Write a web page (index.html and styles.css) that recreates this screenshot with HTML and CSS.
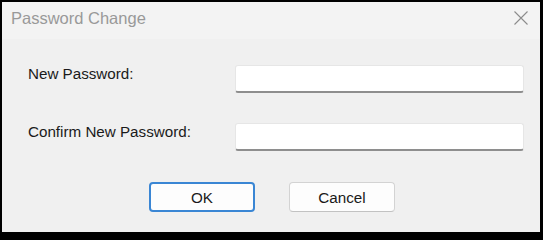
FILE: index.html
```html
<!DOCTYPE html>
<html>
<head>
<meta charset="utf-8">
<title>Password Change</title>
<link rel="stylesheet" href="styles.css">
</head>
<body>
<div class="dialog">
  <div class="titlebar">
    <span class="title">Password Change</span>
    <svg class="close" width="14" height="14" viewBox="0 0 14 14">
      <path d="M0.5 0.5 L13.5 13.5 M13.5 0.5 L0.5 13.5" stroke="#8c8c8c" stroke-width="1.1" fill="none"/>
    </svg>
  </div>
  <div class="content">
    <div class="form">
      <label class="label">New Password:</label>
      <div class="input"></div>
      <label class="label">Confirm New Password:</label>
      <div class="input"></div>
    </div>
    <div class="buttons">
      <button class="btn btn-default">OK</button>
      <button class="btn">Cancel</button>
    </div>
  </div>
</div>
</body>
</html>
```
FILE: styles.css
```css
html, body {
  margin: 0;
  padding: 0;
}
body {
  background: #000;
  width: 543px;
  height: 236px;
  overflow: hidden;
  font-family: "Liberation Sans", Arial, sans-serif;
}
.dialog {
  margin: 2px 3px 4px 2px;
  height: 230px;
  background: #f0f0f0;
  display: flex;
  flex-direction: column;
}
.titlebar {
  height: 37px;
  background: #f3f3f3;
  display: flex;
  justify-content: space-between;
  align-items: flex-start;
  box-sizing: border-box;
  padding: 7px 12px 0 9px;
}
.title {
  font-size: 16.5px;
  line-height: 19px;
  color: #999;
}
.close {
  margin-top: 2px;
  display: block;
}
.content {
  padding: 26px 16px 0 26px;
}
.form {
  display: grid;
  grid-template-columns: 207px 289px;
  row-gap: 30px;
  align-items: start;
}
.label {
  font-size: 15.2px;
  line-height: 17px;
  color: #1a1a1a;
}
.input {
  height: 28px;
  box-sizing: border-box;
  background: #fff;
  border: 1px solid #e6e6e6;
  border-bottom: 2px solid #8e8e8e;
  border-radius: 3px;
}
.buttons {
  display: flex;
  justify-content: center;
  gap: 34px;
  margin-top: 31px;
  margin-left: -8px;
}
.btn {
  width: 106px;
  height: 30px;
  box-sizing: border-box;
  font-family: "Liberation Sans", Arial, sans-serif;
  font-size: 15.2px;
  color: #1a1a1a;
  background: #fdfdfd;
  border: 1px solid #d3d3d3;
  border-bottom-color: #c2c2c2;
  border-radius: 4px;
  padding: 0;
}
.btn-default {
  border: 2px solid #3a86d4;
}
```
